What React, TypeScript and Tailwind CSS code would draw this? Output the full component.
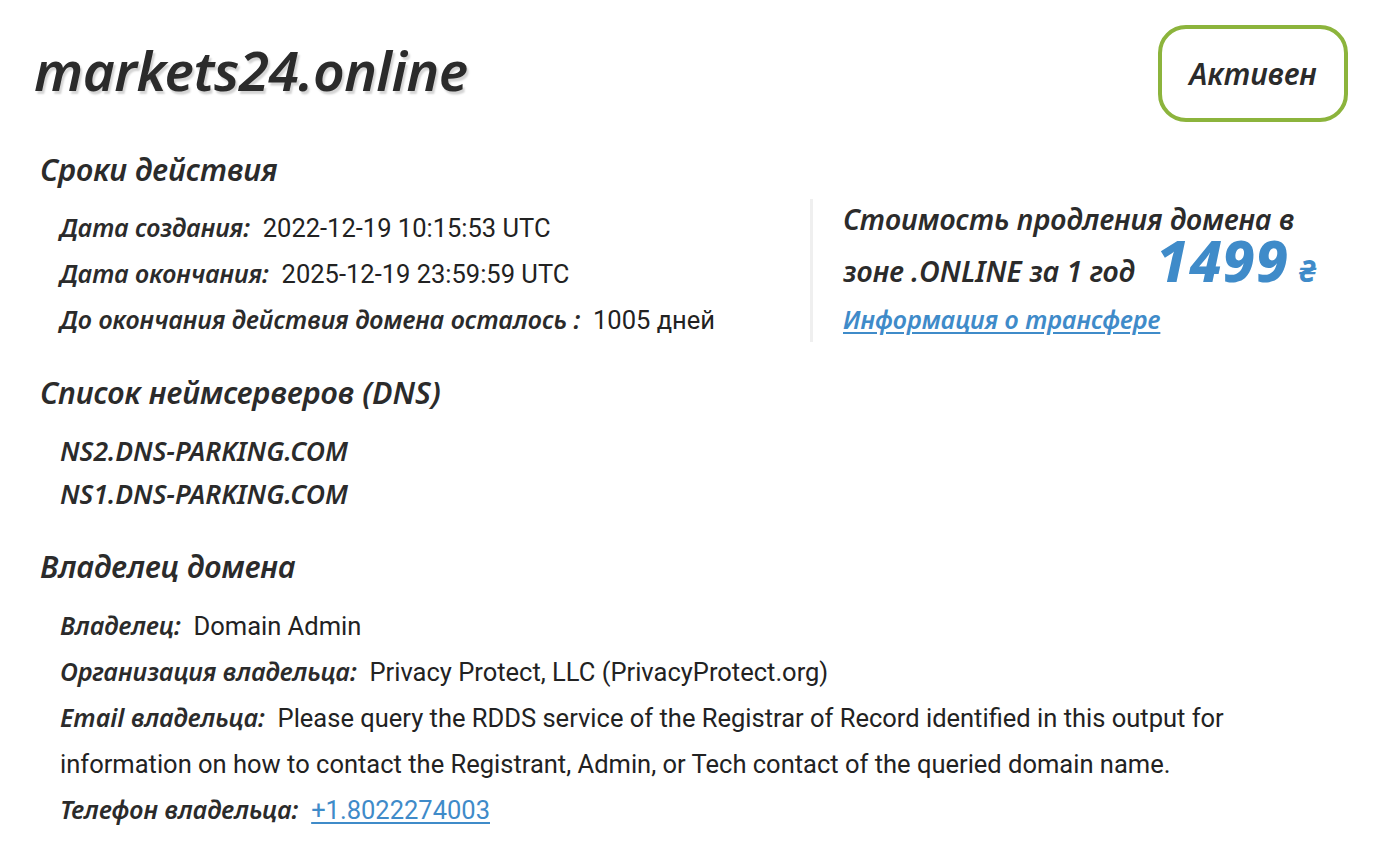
const head = "font-['Noto_Sans',sans-serif] italic font-semibold text-[#2b2b2b]";
const label = "font-['Noto_Sans',sans-serif] italic font-semibold text-[#2b2b2b] text-[25px] leading-none";
const row = "font-['Roboto',sans-serif] text-[#222] text-[25.5px] leading-[46px]";

function Row({ name, children }: { name: string; children: React.ReactNode }) {
  return (
    <p className={row}>
      <span className={label}>{name}:</span>
      {"\u00a0 "}
      {children}
    </p>
  );
}

export default function App() {
  return (
    <div className="min-h-screen bg-white pl-[34px] pr-[38px] pt-[24px]">
      <div className="flex items-start justify-between">
        <h1 className={`${head} text-[55px] leading-[92px] font-bold tracking-[-0.5px] [text-shadow:2px_3px_2px_#d4d4d4]`}>
          markets24.online
        </h1>
        <div className="mt-[1px] flex h-[97px] w-[190px] items-center justify-center rounded-[28px] border-[4px] border-[#8cb43c]">
          <span className={`${head} text-[30px]`}>Активен</span>
        </div>
      </div>

      <h2 className={`${head} mt-[27px] pl-[6px] text-[30.5px] leading-[40px]`}>Сроки действия</h2>
      <div className="flex">
        <div className="w-[776px] pl-[26px] pt-[16px]">
          <Row name="Дата создания">2022-12-19 10:15:53 UTC</Row>
          <Row name="Дата окончания">2025-12-19 23:59:59 UTC</Row>
          <p className={row}>
            <span className={label}>До окончания действия домена осталось :</span>
            {"\u00a0 "}1005 дней
          </p>
        </div>
        <div className="mt-[10px] h-[143px] border-l-[3px] border-[#efefef] pl-[30px]">
          <p className={`${head} text-[28.5px] leading-[40px]`}>Стоимость продления домена в</p>
          <p className={`${head} text-[28.5px] leading-[64px]`}>
            зоне .ONLINE за 1 год{" "}
            <span className="ml-[14px] text-[57px] font-extrabold text-[#3f8bc9] leading-[40px] tracking-[1px]">1499</span>
            <span className="ml-[10px] text-[30px] font-bold text-[#3f8bc9] leading-none">₴</span>
          </p>
          <a href="#" className={`${head} block text-[25px] leading-[32px] text-[#3f8bc9] underline underline-offset-[3px]`}>
            Информация о трансфере
          </a>
        </div>
      </div>

      <h2 className={`${head} mt-[29px] pl-[6px] text-[30.5px] leading-[40px]`}>Список неймсерверов (DNS)</h2>
      <div className="pl-[26px] pt-[18px]">
        <p className={`${head} text-[26.5px] leading-[43px] font-medium`}>NS2.DNS-PARKING.COM</p>
        <p className={`${head} text-[26.5px] leading-[43px] font-medium`}>NS1.DNS-PARKING.COM</p>
      </div>

      <h2 className={`${head} mt-[30px] pl-[6px] text-[30.5px] leading-[40px]`}>Владелец домена</h2>
      <div className="w-[1240px] pl-[26px] pt-[17px]">
        <Row name="Владелец">Domain Admin</Row>
        <Row name="Организация владельца">Privacy Protect, LLC (PrivacyProtect.org)</Row>
        <Row name="Email владельца">
          Please query the RDDS service of the Registrar of Record identified in this output for information on how to
          contact the Registrant, Admin, or Tech contact of the queried domain name.
        </Row>
        <Row name="Телефон владельца">
          <a href="#" className="text-[#3f8bc9] underline underline-offset-[3px]">
            +1.8022274003
          </a>
        </Row>
      </div>
    </div>
  );
}
